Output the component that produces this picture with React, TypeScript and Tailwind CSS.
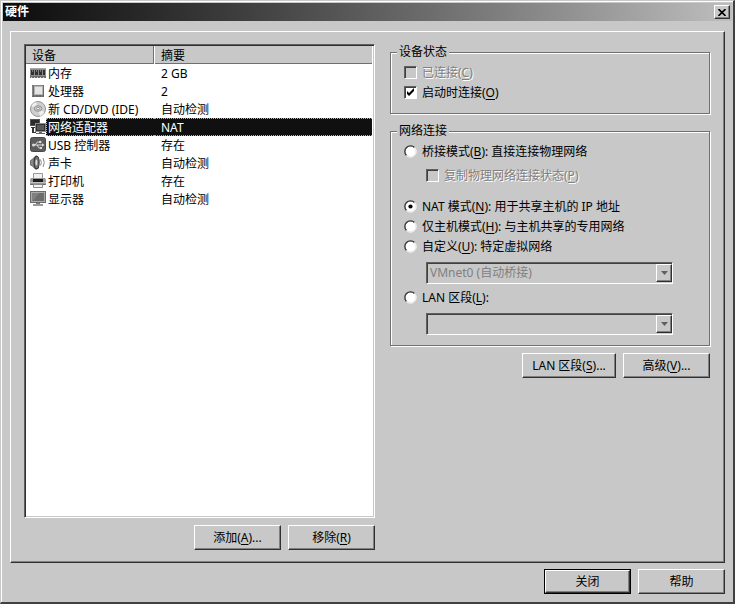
import React, { useState } from "react";
import type { ReactNode } from "react";

const raised =
  "border border-t-white border-l-white border-r-[#303030] border-b-[#303030] shadow-[inset_-1px_-1px_0_#808080]";

function MemoryIcon() {
  return (
    <svg width="16" height="16" viewBox="0 0 16 16" shapeRendering="crispEdges" aria-hidden="true">
      <path d="M0 3h16v10H0z" fill="#8c8c8c" />
      <path d="M0 3h16v1H0z" fill="#a8a8a8" />
      <path d="M1 5h3v5H1zM5 5h3v5H5zM9 5h3v5H9zM13 5h2v5h-2z" fill="#303030" />
      <path d="M2 5h1v2H2zM6 5h1v2H6zM10 5h1v2h-1z" fill="#777" />
      <path d="M0 11h16v2H0z" fill="#6a6a6a" />
      <path d="M1 12h1v1H1zM4 12h1v1H4zM7 12h1v1H7zM10 12h1v1h-1zM13 12h1v1h-1z" fill="#ccc" />
    </svg>
  );
}

function CpuIcon() {
  return (
    <svg width="16" height="16" viewBox="0 0 16 16" aria-hidden="true">
      <path d="M2 2h12v12H2z" fill="#686868" />
      <path d="M3 2h10v1H3zM2 3h1v10H2z" fill="#888" />
      <path d="M4 3h9v9H4z" fill="#b5b5b5" />
      <path d="M5 4h7v7H5z" fill="#e4e4e4" />
      <path d="M5 13h1M8 13h1M11 13h1" stroke="#999" />
    </svg>
  );
}

function DiscIcon() {
  return (
    <svg width="16" height="16" viewBox="0 0 16 16" aria-hidden="true">
      <circle cx="8" cy="8" r="7.500" fill="#cfcfcf" stroke="#8c8c8c" strokeWidth="0.900" />
      <path d="M8 8L1.500 5A7.300 7.300 0 0 1 6 1zM8 8l6.500 3A7.300 7.300 0 0 1 10 15z" fill="#efefef" />
      <ellipse cx="8" cy="7.500" rx="3.800" ry="2.800" fill="#ccc" stroke="#888" strokeWidth="0.900" />
      <ellipse cx="8" cy="7.500" rx="1.600" ry="1.100" fill="#fff" stroke="#777" strokeWidth="0.700" />
    </svg>
  );
}

function NetworkIcon() {
  return (
    <svg width="16" height="16" viewBox="0 0 16 16" shapeRendering="crispEdges" aria-hidden="true">
      <path d="M0 0h10v7H0z" fill="#555" />
      <path d="M1 1h8v5H1z" fill="#2c2c2c" />
      <path d="M1 8h5v1H1zM2 8h2v6H2zM2 13h4v1H2z" fill="#333" />
      <path d="M5 4h11v9H5z" fill="#8c8c8c" />
      <path d="M6 5h9v7H6z" fill="#333" />
      <path d="M7 6h7v5H7z" fill="#585858" />
      <path d="M9 13h3v1H9zM6 14h9v1H6z" fill="#666" />
    </svg>
  );
}

function UsbIcon() {
  return (
    <svg width="16" height="16" viewBox="0 0 16 16" aria-hidden="true">
      <rect x="0.500" y="0.500" width="15" height="14" rx="2" fill="#5c5c5c" stroke="#484848" />
      <path d="M3 8H13M5 8l2.500-3H10M7 8l2 3h2" fill="none" stroke="#ddd" />
      <circle cx="3.500" cy="8" r="1.500" fill="#ddd" />
      <circle cx="10.300" cy="5" r="1.200" fill="#ddd" />
      <path d="M10 10h2v2h-2zM12 6.200L14.500 8 12 9.800z" fill="#ddd" />
    </svg>
  );
}

function SoundIcon() {
  return (
    <svg width="16" height="16" viewBox="0 0 16 16" aria-hidden="true">
      <path d="M0.500 5.500L2 4.500 6 0.800 7.500 1.500V13.500L6 14.300 2 10.800 0.500 10z" fill="#8a8a8a" stroke="#555" strokeWidth="0.800" />
      <ellipse cx="6.600" cy="7.500" rx="2.500" ry="6.300" fill="#777" stroke="#333" strokeWidth="1.100" />
      <ellipse cx="6.400" cy="7.500" rx="1" ry="3" fill="#ddd" />
      <path d="M10.500 4.500q1.800 3 0 6M13 3q2.600 4.500 0 9" fill="none" stroke="#888" />
    </svg>
  );
}

function PrinterIcon() {
  return (
    <svg width="16" height="16" viewBox="0 0 16 16" aria-hidden="true">
      <path d="M3.500 0.500h9v5h-9z" fill="#f0f0f0" stroke="#999" />
      <path d="M1 5h14l1 1.500V12H0V6.500z" fill="#989898" />
      <path d="M3 6h10v3H3z" fill="#1c1c1c" />
      <path d="M0 9h16v1H0z" fill="#c0c0c0" />
      <path d="M0.500 11.500h15" stroke="#666" />
      <path d="M3.500 11.500h9v3h-9z" fill="#f4f4f4" stroke="#888" />
    </svg>
  );
}

function DisplayIcon() {
  return (
    <svg width="16" height="16" viewBox="0 0 16 16" shapeRendering="crispEdges" aria-hidden="true">
      <path d="M0 0h16v12H0z" fill="#6a6a6a" />
      <path d="M1 1h14v10H1z" fill="#aaa" />
      <path d="M2 2h12v8H2z" fill="#6c6c6c" />
      <path d="M2 2h7L3 10H2z" fill="#808080" />
      <path d="M6 12h4v1H6z" fill="#777" />
      <path d="M3 13h10v2H3z" fill="#999" />
    </svg>
  );
}

const devices: { name: string; summary: string; icon: ReactNode }[] = [
  { name: "内存", summary: "2 GB", icon: <MemoryIcon /> },
  { name: "处理器", summary: "2", icon: <CpuIcon /> },
  { name: "新 CD/DVD (IDE)", summary: "自动检测", icon: <DiscIcon /> },
  { name: "网络适配器", summary: "NAT", icon: <NetworkIcon /> },
  { name: "USB 控制器", summary: "存在", icon: <UsbIcon /> },
  { name: "声卡", summary: "自动检测", icon: <SoundIcon /> },
  { name: "打印机", summary: "存在", icon: <PrinterIcon /> },
  { name: "显示器", summary: "自动检测", icon: <DisplayIcon /> },
];

function Key({ children }: { children: string }) {
  return <span className="underline underline-offset-2">{children}</span>;
}

function PushButton({ children, wide }: { children: ReactNode; wide?: boolean }) {
  return (
    <button type="button" className={`h-[25px] shrink-0 bg-[#c8c8c8] ${raised} ${wide ? "w-[94px]" : "w-[87px]"}`}>
      {children}
    </button>
  );
}

function Group({ title, children, className }: { title: string; children: ReactNode; className: string }) {
  return (
    <fieldset
      className={`min-w-0 border border-[#707070] pl-[13px] pr-9 shadow-[1px_1px_0_#fff,inset_1px_1px_0_#fff] ${className}`}
    >
      <legend className="-ml-[7px] bg-[#c8c8c8] px-0.5 leading-4">{title}</legend>
      {children}
    </fieldset>
  );
}

function Check({ children, checked, disabled }: { children: ReactNode; checked?: boolean; disabled?: boolean }) {
  return (
    <label className={`flex h-5 items-center gap-[5px] ${disabled ? "text-[#808080] [text-shadow:1px_1px_0_#fff]" : ""}`}>
      <span className="relative mb-0.5 size-[13px] shrink-0">
        <input
          type="checkbox"
          defaultChecked={checked}
          disabled={disabled}
          className="peer block size-[13px] appearance-none border border-t-[#606060] border-l-[#606060] border-r-white border-b-white bg-white shadow-[inset_1px_1px_0_#404040] disabled:bg-[#c8c8c8]"
        />
        <svg
          className="pointer-events-none absolute inset-0 hidden peer-checked:block"
          width="13"
          height="13"
          viewBox="0 0 13 13"
          aria-hidden="true"
        >
          <path d="M3 5v3l2 2 5-5V2L5 7z" fill="#000" />
        </svg>
      </span>
      <span>{children}</span>
    </label>
  );
}

function Radio({
  value,
  mode,
  onPick,
  children,
}: {
  value: string;
  mode: string;
  onPick: (value: string) => void;
  children: ReactNode;
}) {
  return (
    <label className="flex h-5 items-center gap-[5px]">
      <span className="relative mb-0.5 size-[13px] shrink-0">
        <input
          type="radio"
          name="mode"
          checked={mode === value}
          onChange={() => onPick(value)}
          className="peer block size-[13px] appearance-none"
        />
        <svg className="pointer-events-none absolute inset-0" width="13" height="13" viewBox="0 0 13 13" aria-hidden="true">
          <circle cx="6.500" cy="6.500" r="5" fill="#fff" />
          <path d="M2.500 10.500A5.500 5.500 0 0 1 10.500 2.500" fill="none" stroke="#333" strokeWidth="1.300" />
          <path d="M10.500 2.500A5.500 5.500 0 0 1 2.500 10.500" fill="none" stroke="#fff" />
          {mode === value && <circle cx="6.500" cy="6.500" r="2.100" fill="#000" />}
        </svg>
      </span>
      <span>{children}</span>
    </label>
  );
}

function Combo({ label, text }: { label: string; text: string }) {
  return (
    <div className="relative ml-[22px] h-[22px]">
      <select
        aria-label={label}
        disabled
        className="block h-[22px] w-full appearance-none border border-t-[#606060] border-l-[#606060] border-r-white border-b-white bg-[#c8c8c8] px-[3px] text-[#808080] opacity-100 shadow-[inset_1px_1px_0_#404040]"
      >
        <option>{text}</option>
      </select>
      <span
        className={`pointer-events-none absolute top-[2px] right-[1px] flex h-[18px] w-4 items-center justify-center bg-[#c8c8c8] ${raised}`}
      >
        <svg width="7" height="4" viewBox="0 0 7 4" aria-hidden="true">
          <path d="M0 0h7L3.500 4z" fill="#606060" />
        </svg>
      </span>
    </div>
  );
}

export default function App() {
  const [selected, setSelected] = useState(3);
  const [mode, setMode] = useState("nat");

  return (
    <div className="flex min-h-screen flex-col border-t border-r-2 border-b-2 border-l border-t-[#c8c8c8] border-r-[#404040] border-b-[#404040] border-l-[#c8c8c8] bg-[#c8c8c8] font-['Noto_Sans','Noto_Sans_CJK_SC',sans-serif] text-xs text-black">
      <div className="flex flex-1 flex-col border-t border-l border-white pt-px pl-px">
        <header className="mr-px flex h-[18px] items-center justify-between bg-linear-to-r from-[#0c0c0c] to-[#bebebe] pr-[2px] pl-[2px]">
          <h1 className="text-xs leading-[18px] font-bold text-white">硬件</h1>
          <button
            type="button"
            aria-label="关闭窗口"
            className={`flex h-[14px] w-4 items-center justify-center bg-[#c8c8c8] ${raised}`}
          >
            <svg width="8" height="7" viewBox="0 0 8 7" aria-hidden="true">
              <path d="M0.500 0L7.500 7M7.500 0L0.500 7" stroke="#000" strokeWidth="1.600" />
            </svg>
          </button>
        </header>

        <main className="mt-[10px] mr-2 ml-[7px] flex flex-1 gap-[15px] border border-t-white border-l-white border-r-[#303030] border-b-[#303030] pt-3 pr-[14px] pb-3 pl-[13px] shadow-[inset_-1px_-1px_0_#808080]">
          <section className="flex min-w-0 flex-[351] flex-col gap-[7px]">
            <div className="flex-1 border border-t-[#606060] border-l-[#606060] border-r-white border-b-white bg-white shadow-[inset_1px_1px_0_#303030,inset_-1px_-1px_0_#c8c8c8]">
              <div className="p-px pr-0.5">
                <table className="w-full table-fixed border-collapse">
                  <colgroup>
                    <col className="w-[128px]" />
                    <col />
                  </colgroup>
                  <thead>
                    <tr className="h-[18px] bg-[#c8c8c8] text-left shadow-[inset_0_-1px_0_#707070]">
                      <th className="p-0 pl-[6px] font-normal shadow-[inset_-1px_0_0_#707070,1px_0_0_#fff]">
                        <div className="h-[18px] pt-px leading-[18px]">设备</div>
                      </th>
                      <th className="p-0 pl-[7px] font-normal">
                        <div className="h-[18px] pt-px leading-[18px]">摘要</div>
                      </th>
                    </tr>
                  </thead>
                  <tbody>
                    {devices.map((device, i) => (
                      <tr
                        key={device.name}
                        aria-selected={i === selected}
                        onClick={() => setSelected(i)}
                        className="group leading-[18px]"
                      >
                        <td className="p-0">
                          <div className="flex h-[18px] items-center pl-[4px]">
                            <span className="shrink-0">{device.icon}</span>
                            <span className="h-[18px] flex-1 border border-r-0 border-transparent pl-px leading-[18px] whitespace-nowrap group-aria-selected:border-dotted group-aria-selected:border-[#b0b0b0] group-aria-selected:bg-[#101010] group-aria-selected:text-white">
                              {device.name}
                            </span>
                          </div>
                        </td>
                        <td className="p-0">
                          <div className="h-[18px] border-y border-transparent pl-[7px] leading-[18px] group-aria-selected:border-dotted group-aria-selected:border-[#b0b0b0] group-aria-selected:bg-[#101010] group-aria-selected:text-white">
                            {device.summary}
                          </div>
                        </td>
                      </tr>
                    ))}
                  </tbody>
                </table>
              </div>
            </div>
            <div className="flex justify-end gap-[7px]">
              <PushButton>
                添加(<Key>A</Key>)...
              </PushButton>
              <PushButton>
                移除(<Key>R</Key>)
              </PushButton>
            </div>
          </section>

          <section className="flex min-w-0 flex-[320] flex-col">
            <Group title="设备状态" className="pt-[3px] pb-[10px]">
              <Check disabled>
                已连接(<Key>C</Key>)
              </Check>
              <Check checked>
                启动时连接(<Key>O</Key>)
              </Check>
            </Group>

            <Group title="网络连接" className="mt-[9px] pt-[3px] pb-[10px]">
              <Radio value="bridged" mode={mode} onPick={setMode}>
                桥接模式(<Key>B</Key>): 直接连接物理网络
              </Radio>
              <div className="mt-1 mb-[11px] ml-[22px]">
                <Check disabled>
                  复制物理网络连接状态(<Key>P</Key>)
                </Check>
              </div>
              <Radio value="nat" mode={mode} onPick={setMode}>
                NAT 模式(<Key>N</Key>): 用于共享主机的 IP 地址
              </Radio>
              <Radio value="host" mode={mode} onPick={setMode}>
                仅主机模式(<Key>H</Key>): 与主机共享的专用网络
              </Radio>
              <Radio value="custom" mode={mode} onPick={setMode}>
                自定义(<Key>U</Key>): 特定虚拟网络
              </Radio>
              <div className="mt-[5px] mb-1">
                <Combo label="特定虚拟网络" text="VMnet0 (自动桥接)" />
              </div>
              <Radio value="lan" mode={mode} onPick={setMode}>
                LAN 区段(<Key>L</Key>):
              </Radio>
              <div className="mt-[5px]">
                <Combo label="LAN 区段" text="" />
              </div>
            </Group>

            <div className="mt-[7px] flex justify-end gap-[7px]">
              <PushButton wide>
                LAN 区段(<Key>S</Key>)...
              </PushButton>
              <PushButton>
                高级(<Key>V</Key>)...
              </PushButton>
            </div>
          </section>
        </main>

        <footer className="flex items-center justify-end gap-[7px] pt-[6px] pr-2 pb-2">
          <div className="border border-black">
            <button type="button" className={`block h-[23px] w-[85px] bg-[#c8c8c8] ${raised}`}>
              关闭
            </button>
          </div>
          <PushButton>帮助</PushButton>
        </footer>
      </div>
    </div>
  );
}
